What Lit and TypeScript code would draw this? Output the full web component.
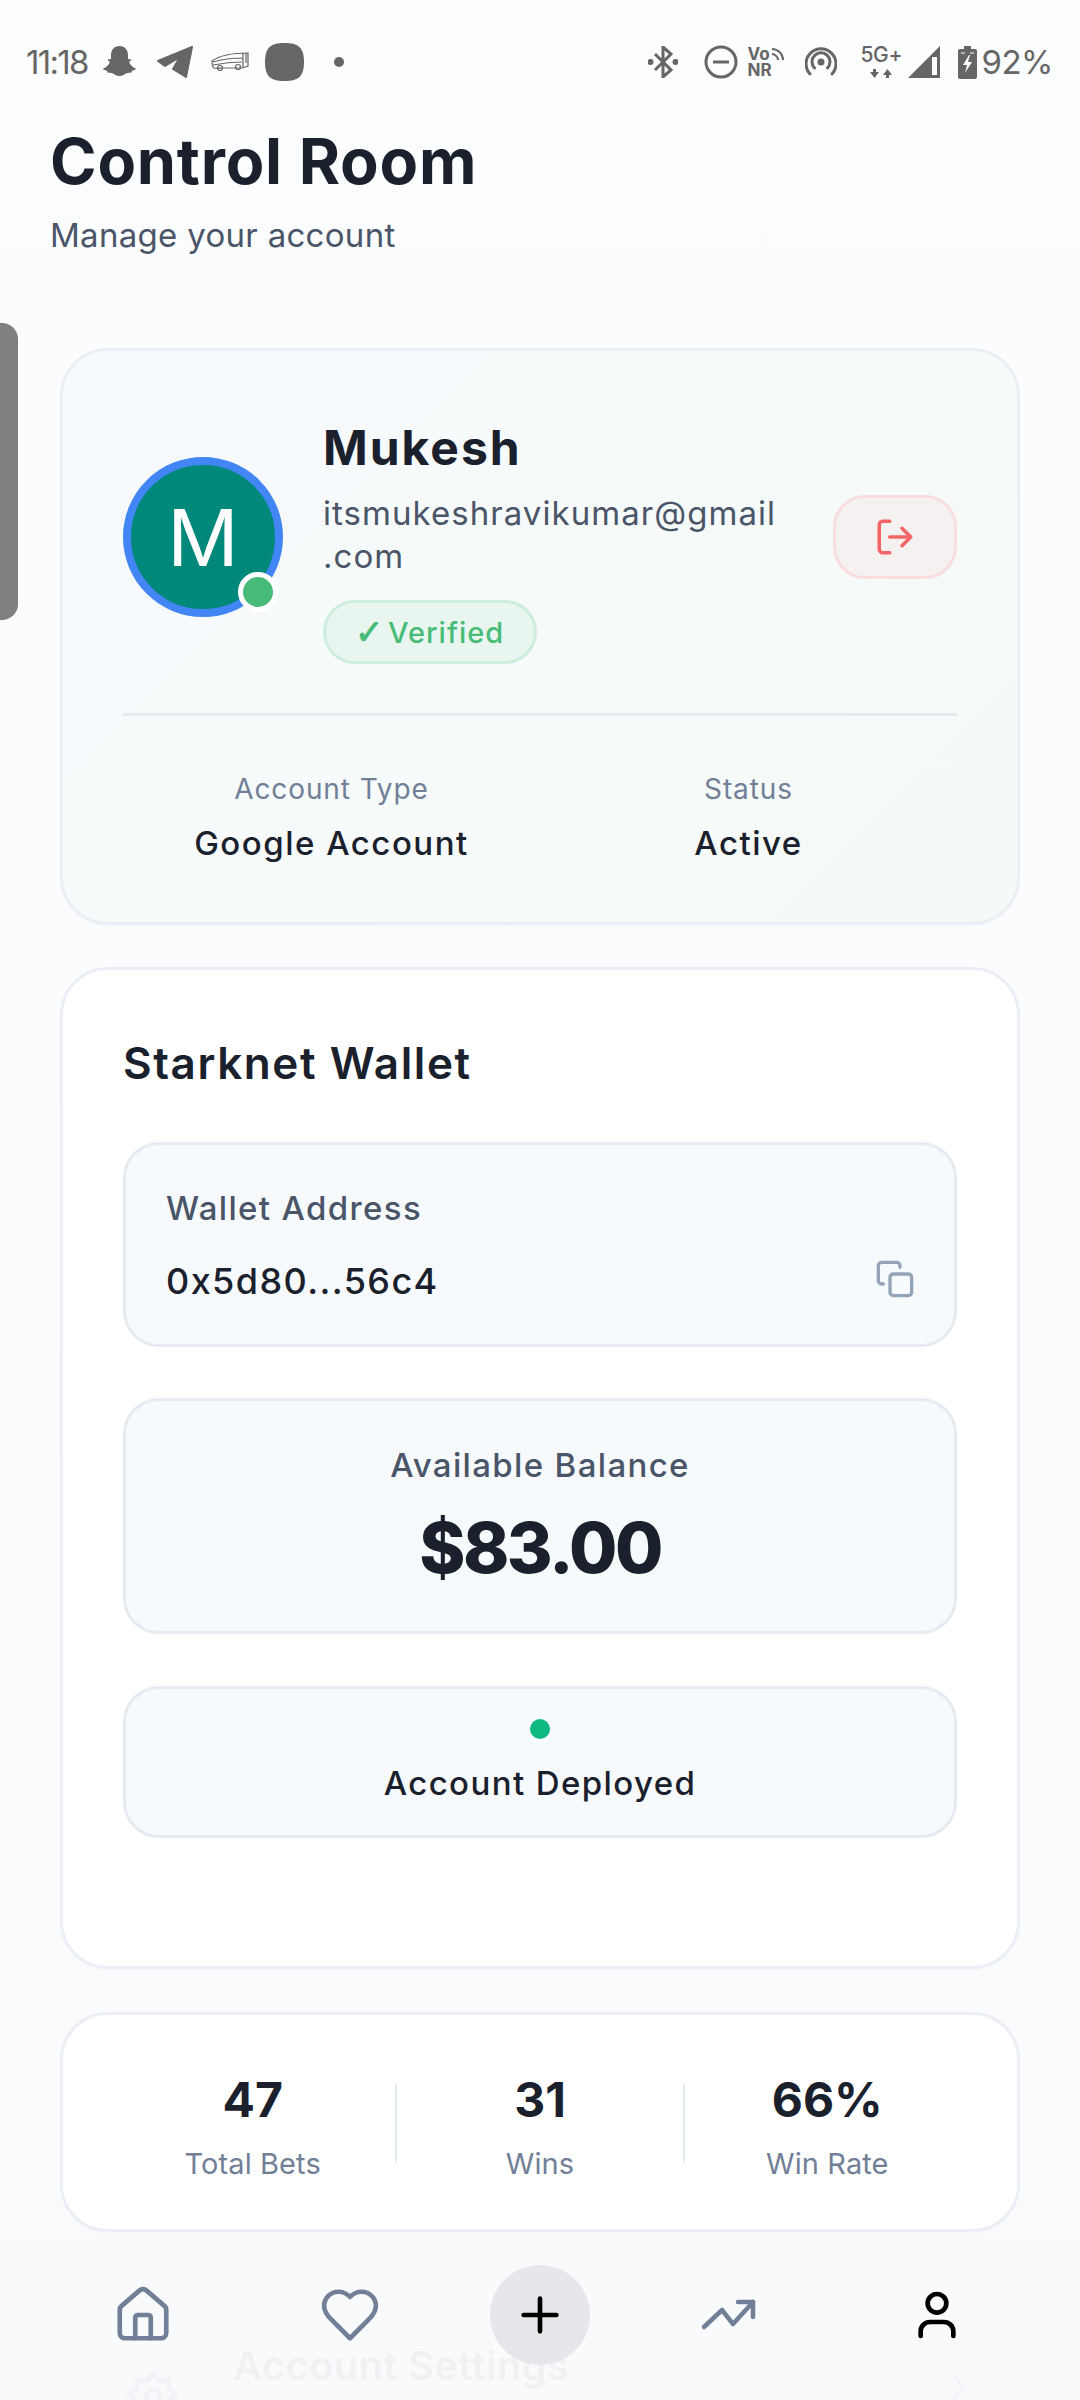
import { LitElement, html, css } from "lit";
import { customElement } from "lit/decorators.js";

@customElement("app-root")
export class AppRoot extends LitElement {
  static styles = css`
    :host { display: block; position: relative; width: 1080px; height: 2400px; overflow: hidden; background: linear-gradient(180deg, #fcfdfe, #f8fafc); font-family: Inter, "Liberation Sans", sans-serif; color: #1a202c; }
    * { box-sizing: border-box; }
    svg { display: block; flex: none; }
    .status { height: 124px; padding-left: 26px; display: flex; align-items: center; color: #666; }
    .time { font-size: 33px; width: 61px; letter-spacing: -1.7px; font-weight: 400; line-height: 40px; white-space: nowrap; margin-right: 15px; }
    .left { display: flex; align-items: center; }
    .right { margin-left: auto; padding-right: 27px; display: flex; align-items: center; }
    .pct { font-size: 33px; font-weight: 400; letter-spacing: -.5px; line-height: 40px; margin-left: 5px; }
    .vonr { width: 36px; height: 32px; position: relative; margin-left: 10px; font-size: 17px; font-weight: 700; line-height: 16px; }
    .vonr span { display: block; }
    .vonr svg { position: absolute; right: 0; top: 1px; }
    .fiveg { width: 42px; margin-left: 24px; font-size: 21px; font-weight: 500; line-height: 20px; height: 34px; letter-spacing: -.4px; white-space: nowrap; }
    header { padding: 0 50px; margin-bottom: 92px; }
    h1 { margin: 0 0 16px; font-size: 63px; line-height: 74px; font-weight: 700; letter-spacing: .8px; }
    .sub { font-size: 33px; line-height: 42px; color: #4a5568; letter-spacing: .3px; }
    main { padding: 0 60px; display: flex; flex-direction: column; }
    .card { border: 3px solid #ebeff5; border-radius: 48px; background: #fff; box-shadow: 0 1px 3px rgba(0,0,0,.02); }
    .profile { padding: 62px 60px 0; background: linear-gradient(135deg, #f7fafd, #f5faf7); height: 577px; }
    .row { display: flex; align-items: center; }
    .avatar { width: 160px; height: 160px; border-radius: 50%; border: 8px solid #4285f4; background: #00897b; color: #fff; font-size: 79px; line-height: 1; font-weight: 400; display: flex; align-items: center; justify-content: center; position: relative; margin: 0 40px 3px 0; flex: none; }
    .online { position: absolute; left: 107px; top: 107px; width: 40px; height: 40px; border-radius: 50%; background: #48bb78; border: 5px solid #fff; }
    .info { flex: 1; min-width: 0; }
    .name { font-size: 48px; line-height: 70px; font-weight: 700; letter-spacing: 2px; }
    .email { font-size: 33px; line-height: 43px; color: #4a5568; margin: 9px 0 22px; letter-spacing: 1.05px; white-space: nowrap; }
    .badge { display: inline-flex; align-items: center; height: 64px; width: 214px; padding-left: 29px; border-radius: 32px; border: 3px solid #cdeedd; background: #e9f6f0; color: #48bb78; font-size: 29px; font-weight: 500; letter-spacing: 1px; }
    .check { width: 33px; font-family: "DejaVu Sans", sans-serif; font-size: 34px; line-height: 1; font-weight: 700; letter-spacing: 0; -webkit-text-stroke: 1px #48bb78; white-space: nowrap; }
    .logout { width: 124px; height: 84px; border-radius: 32px; border: 3px solid #f8dede; background: #f5f1f0; display: flex; align-items: center; justify-content: center; flex: none; color: #f56565; padding: 0; margin-bottom: 3px; }
    .rule { height: 3px; background: #e6ebf2; margin: 49px 0 53px; }
    .meta { display: grid; grid-template-columns: 1fr 1fr; text-align: center; }
    .meta .l { font-size: 28px; line-height: 40px; color: #718096; letter-spacing: .9px; }
    .meta .v { font-size: 33px; line-height: 48px; margin-top: 10px; font-weight: 500; letter-spacing: 1.5px; }
    .wallet { margin-top: 42px; padding: 65px 60px 128px; }
    h2 { margin: 0 0 51px; font-size: 44px; line-height: 56px; font-weight: 600; letter-spacing: 1.6px; }
    .box { border: 3px solid #e6ebf2; border-radius: 36px; background: #f7fafd; }
    .addr { height: 205px; padding: 41px 39px 0 40px; }
    .addr .l, .bal .l { font-size: 33px; line-height: 44px; color: #4a5568; font-weight: 500; letter-spacing: 1.35px; }
    .addr .r { display: flex; justify-content: space-between; align-items: center; margin-top: 27px; height: 48px; color: #94a3b8; }
    .addr .r svg { align-self: flex-start; margin-top: 2px; }
    .addr .v { font-size: 36px; font-weight: 500; color: #1a202c; letter-spacing: 1.4px; }
    .bal { margin-top: 51px; height: 236px; padding-top: 42px; text-align: center; }
    .bal .v { font-size: 70px; line-height: 88px; margin-top: 17px; font-weight: 800; letter-spacing: -2.5px; }
    .dep { margin-top: 52px; height: 152px; padding-top: 30px; display: flex; flex-direction: column; align-items: center; }
    .dot { width: 20px; height: 20px; border-radius: 50%; background: #10b981; }
    .dep .t { margin-top: 22px; font-size: 33px; line-height: 44px; font-weight: 500; letter-spacing: 1.4px; }
    .stats { margin-top: 43px; height: 220px; padding: 55px 47px 0; display: flex; align-items: flex-start; }
    .stat { flex: 1; text-align: center; }
    .stat .v { font-size: 48px; line-height: 60px; font-weight: 700; }
    .stat .l { font-size: 29px; line-height: 44px; margin-top: 12px; color: #718096; letter-spacing: .1px; }
    .sep { width: 2px; height: 80px; margin-top: 13px; background: #e6ebf2; flex: none; }
    .settings { margin-top: 63px; height: 300px; padding: 49px 40px; display: flex; align-items: flex-start; gap: 31px; position: relative; }
    .gear { width: 99px; height: 99px; border-radius: 28px; background: #edf2f7; display: flex; align-items: center; justify-content: center; color: #4a5568; flex: none; }
    .settings .t { font-size: 40px; line-height: 48px; font-weight: 600; margin-top: -5px; letter-spacing: .3px; }
    .chev { position: absolute; right: 51px; top: 76px; color: #4a5568; }
    nav { position: absolute; left: 0; right: 0; bottom: 0; height: 160px; background: rgba(249,250,252,.96); display: flex; justify-content: center; align-items: center; gap: 73px; padding-bottom: 10px; color: #718096; }
    .item { width: 134px; display: flex; justify-content: center; }
    .plus { width: 100px; height: 100px; border-radius: 50%; background: #e5e7eb; display: flex; align-items: center; justify-content: center; color: #000; flex: none; }
    .me { color: #000; }
    .tab { position: absolute; left: 0; top: 323px; width: 18px; height: 297px; background: #808080; border-radius: 0 16px 16px 0; }
  `;

  render() {
    return html`
      <div class="status">
        <div class="left">
          <div class="time">11:18</div>
          <svg width="35" height="34" viewBox="0 0 35 34" fill="currentColor" style="margin-right:20px"><path d="M17.5 1C12 1 9 5 9 10v4l-3 .5c-.6.6 0 1.5 2 2.3-1 3-3.5 5.5-7 7 .3 1 2 1.5 4 2 .3 1 .5 2 1.2 2 1.5 0 3-.4 4.8.6 1.7 1 3.5 2.6 6.5 2.6s4.8-1.6 6.5-2.6c1.8-1 3.3-.6 4.8-.6.7 0 .9-1 1.2-2 2-.5 3.7-1 4-2-3.5-1.5-6-4-7-7 2-.8 2.6-1.7 2-2.3L26 14v-4c0-5-3-9-8.5-9z"/></svg>
          <svg width="36" height="32" viewBox="0 0 36 32" fill="currentColor" stroke="currentColor" stroke-width="2" stroke-linejoin="round" style="margin-right:18px"><path d="M1 15 35 1 29 31 16 23 23 11 8 20Z"/></svg>
          <svg width="38" height="20" viewBox="0 0 38 20" fill="none" stroke="currentColor" stroke-width="1.2" style="margin-right:16px"><path d="M1 9C8 4 22 1 37 1v13l-6 2H11c-1 0-5 1-8 0-2-1-2-5-2-7zM2 10c10-3 22-4 30-4M2 13c10-2 20-3 29-3M32 1v14M35 2v9"/><circle cx="9" cy="16" r="2.5"/><circle cx="27" cy="15" r="2.5"/></svg>
          <svg width="39" height="38" viewBox="0 0 39 38" fill="currentColor" style="margin-right:30px"><path d="M19.5 0C33 0 39 4 39 19s-6 19-19.5 19S0 34 0 19 6 0 19.5 0z"/></svg>
          <svg width="10" height="10" viewBox="0 0 10 10" fill="currentColor"><circle cx="5" cy="5" r="5"/></svg>
        </div>
        <div class="right">
          <svg width="30" height="32" viewBox="0 0 30 32" fill="none" stroke="currentColor" stroke-width="3" style="margin-right:26px"><path d="M7 8l16 16-8 7V1l8 7L7 24"/><circle cx="2.5" cy="16" r="1.5" fill="currentColor"/><circle cx="27.5" cy="16" r="1.5" fill="currentColor"/></svg>
          <svg width="34" height="34" viewBox="0 0 34 34" fill="none" stroke="currentColor" stroke-width="3"><circle cx="17" cy="17" r="15"/><path d="M9 17h16"/></svg>
          <div class="vonr"><span>Vo</span><span>NR</span><svg width="13" height="14" viewBox="0 0 13 14" fill="none" stroke="currentColor" stroke-width="2"><path d="M1 2c6 0 11 5 11 11M1 7c3 0 6 3 6 6"/></svg></div>
          <svg width="32" height="32" viewBox="0 0 32 32" fill="none" stroke="currentColor" stroke-width="3" stroke-linecap="round" style="margin-left:21px"><circle cx="16" cy="16" r="3.5" fill="currentColor" stroke="none"/><path d="M9.5 22a9 9 0 1 1 13 0M5 28a15 15 0 1 1 22 0"/></svg>
          <div class="fiveg">5G+<svg width="22" height="10" viewBox="0 0 22 10" fill="currentColor" style="margin:4px 0 0 9px"><path d="M0 3h3V0h3v3h3L4.500 9zM13 6h3v3h3V6h3L17.500 0z"/></svg></div>
          <svg width="32" height="32" viewBox="0 0 32 32" style="margin-left:5px"><path fill="currentColor" d="M32 0v32H0z"/><path fill="#fbfcfe" d="M24 11h5v18h-5z"/></svg>
          <svg width="19" height="33" viewBox="0 0 19 33" style="margin-left:18px"><path fill="currentColor" d="M6 0h7v3h4a2 2 0 0 1 2 2v26a2 2 0 0 1-2 2H2a2 2 0 0 1-2-2V5a2 2 0 0 1 2-2h4z"/><path fill="#fbfcfe" d="M11 9 5 19h4l-2 8 7-11h-4l2-7zM3 6.500h4v1H3zM12 6.500h4v1h-4z"/></svg>
          <div class="pct">92%</div>
        </div>
      </div>
      <header>
        <h1>Control Room</h1>
        <div class="sub">Manage your account</div>
      </header>
      <main>
        <section class="card profile">
          <div class="row">
            <div class="avatar">M<span class="online"></span></div>
            <div class="info">
              <div class="name">Mukesh</div>
              <div class="email">itsmukeshravikumar@gmail<br />.com</div>
              <div class="badge"><span class="check">✓</span><span>Verified</span></div>
            </div>
            <button class="logout" aria-label="Log out">
              <svg width="42" height="42" viewBox="0 0 24 24" fill="none" stroke="currentColor" stroke-width="2" stroke-linecap="round" stroke-linejoin="round"><path d="M9 21H5a2 2 0 0 1-2-2V5a2 2 0 0 1 2-2h4"/><path d="M16 17l5-5-5-5M21 12H9"/></svg>
            </button>
          </div>
          <div class="rule"></div>
          <div class="meta">
            <div><div class="l">Account Type</div><div class="v">Google Account</div></div>
            <div><div class="l">Status</div><div class="v">Active</div></div>
          </div>
        </section>
        <section class="card wallet">
          <h2>Starknet Wallet</h2>
          <div class="box addr">
            <div class="l">Wallet Address</div>
            <div class="r">
              <div class="v">0x5d80...56c4</div>
              <svg width="40" height="40" viewBox="0 0 24 24" fill="none" stroke="currentColor" stroke-width="2" stroke-linecap="round" stroke-linejoin="round"><rect x="9" y="9" width="13" height="13" rx="2"/><path d="M5 15H4a2 2 0 0 1-2-2V4a2 2 0 0 1 2-2h9a2 2 0 0 1 2 2v1"/></svg>
            </div>
          </div>
          <div class="box bal">
            <div class="l">Available Balance</div>
            <div class="v">$83.00</div>
          </div>
          <div class="box dep">
            <div class="dot"></div>
            <div class="t">Account Deployed</div>
          </div>
        </section>
        <section class="card stats">
          <div class="stat"><div class="v">47</div><div class="l">Total Bets</div></div>
          <div class="sep"></div>
          <div class="stat"><div class="v">31</div><div class="l">Wins</div></div>
          <div class="sep"></div>
          <div class="stat"><div class="v">66%</div><div class="l">Win Rate</div></div>
        </section>
        <section class="card settings">
          <div class="gear"><svg width="56" height="56" viewBox="0 0 24 24" fill="none" stroke="currentColor" stroke-width="2"><circle cx="12" cy="12" r="3"/><path d="M12 2l2.500 3 4-.5.500 4 3 2.500-3 2.500-.5 4-4-.5-2.500 3-2.500-3-4 .5-.5-4-3-2.500 3-2.500.5-4 4 .5z"/></svg></div>
          <div class="t">Account Settings</div>
          <svg class="chev" width="14" height="26" viewBox="0 0 14 26" fill="none" stroke="currentColor" stroke-width="3"><path d="M2 2l10 11L2 24"/></svg>
        </section>
      </main>
      <nav>
        <div class="item"><svg width="62" height="62" viewBox="0 0 24 24" fill="none" stroke="currentColor" stroke-width="1.8" stroke-linecap="round" stroke-linejoin="round"><path d="M15 21v-8a1 1 0 0 0-1-1h-4a1 1 0 0 0-1 1v8"/><path d="M3 10a2 2 0 0 1 .709-1.528l7-5.999a2 2 0 0 1 2.582 0l7 5.999A2 2 0 0 1 21 10v9a2 2 0 0 1-2 2H5a2 2 0 0 1-2-2z"/></svg></div>
        <div class="item"><svg width="62" height="62" viewBox="0 0 24 24" fill="none" stroke="currentColor" stroke-width="1.8" stroke-linecap="round" stroke-linejoin="round"><path d="M19 14c1.490-1.460 3-3.210 3-5.500A5.500 5.500 0 0 0 16.500 3c-1.760 0-3 .5-4.500 2-1.500-1.500-2.740-2-4.500-2A5.500 5.500 0 0 0 2 8.500c0 2.300 1.500 4.050 3 5.500l7 7Z"/></svg></div>
        <div class="plus"><svg width="56" height="56" viewBox="0 0 24 24" fill="none" stroke="currentColor" stroke-width="2" stroke-linecap="round"><path d="M5 12h14M12 5v14"/></svg></div>
        <div class="item"><svg width="56" height="32" viewBox="0 0 56 32" fill="none" stroke="currentColor" stroke-width="4.500" stroke-linecap="round" stroke-linejoin="round"><path d="M2 28 20 11l11 14L51 3"/><path d="M36 3h15v15"/></svg></div>
        <div class="item me"><svg width="56" height="56" viewBox="0 0 24 24" fill="none" stroke="currentColor" stroke-width="2" stroke-linecap="round" stroke-linejoin="round"><path d="M19 21v-2a4 4 0 0 0-4-4H9a4 4 0 0 0-4 4v2"/><circle cx="12" cy="7" r="4"/></svg></div>
      </nav>
      <div class="tab"></div>
    `;
  }
}
